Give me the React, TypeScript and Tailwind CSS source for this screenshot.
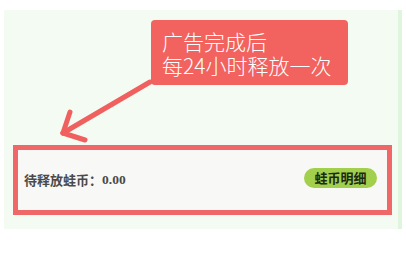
import React from 'react';

const cjk = { fontFamily: '"Noto Sans CJK SC", "Noto Sans", sans-serif' };

const App: React.FC = () => {
  return (
    <div className="w-[406px] h-[253px] bg-white pt-[10px] pl-[4px] pr-[4px]" style={cjk}>
      <div className="relative flex h-[219px] bg-[#f3fbf2]">
        <div className="flex-1 flex flex-col">
          {/* callout */}
          <div className="ml-[147px] mt-[10px] w-[197px] h-[65px] rounded-[4px] bg-[#f2625f] pl-[11px] pt-[9px] text-white text-[21px] leading-[24px] font-light">
            <div>广告完成后</div>
            <div>每24小时释放一次</div>
          </div>

          {/* highlighted row */}
          <div className="ml-[9px] mr-[6px] mt-[60px] h-[70px] border-[5px] border-[#f06767] bg-[#f8f8f6] flex items-center justify-between pl-[6px] pr-[10px]">
            <div className="flex items-center text-[13px] text-[#4a4a4a] font-semibold">
              <span>待释放蛙币：</span>
              <span className="font-bold text-[13.5px]" style={{ fontFamily: '"Liberation Serif", serif' }}>0.00</span>
            </div>
            <button className="w-[73px] h-[20px] mb-[5px] rounded-full bg-[#a2d04c] text-[13px] font-bold text-[#1e2a12] leading-none flex items-center justify-center">
              蛙币明细
            </button>
          </div>
        </div>
        <div className="w-[4px] bg-[#dff5de]" />

        {/* arrow */}
        <svg className="absolute left-0 top-0 pointer-events-none" width="398" height="219" viewBox="0 0 398 219">
          <g stroke="#f0605e" strokeWidth="5" strokeLinecap="round" strokeLinejoin="round" fill="none">
            <line x1="146" y1="72" x2="59" y2="123" />
            <line x1="59" y1="123" x2="66" y2="102" />
            <line x1="59" y1="123" x2="81" y2="130" />
          </g>
        </svg>
      </div>
    </div>
  );
};

export default App;
